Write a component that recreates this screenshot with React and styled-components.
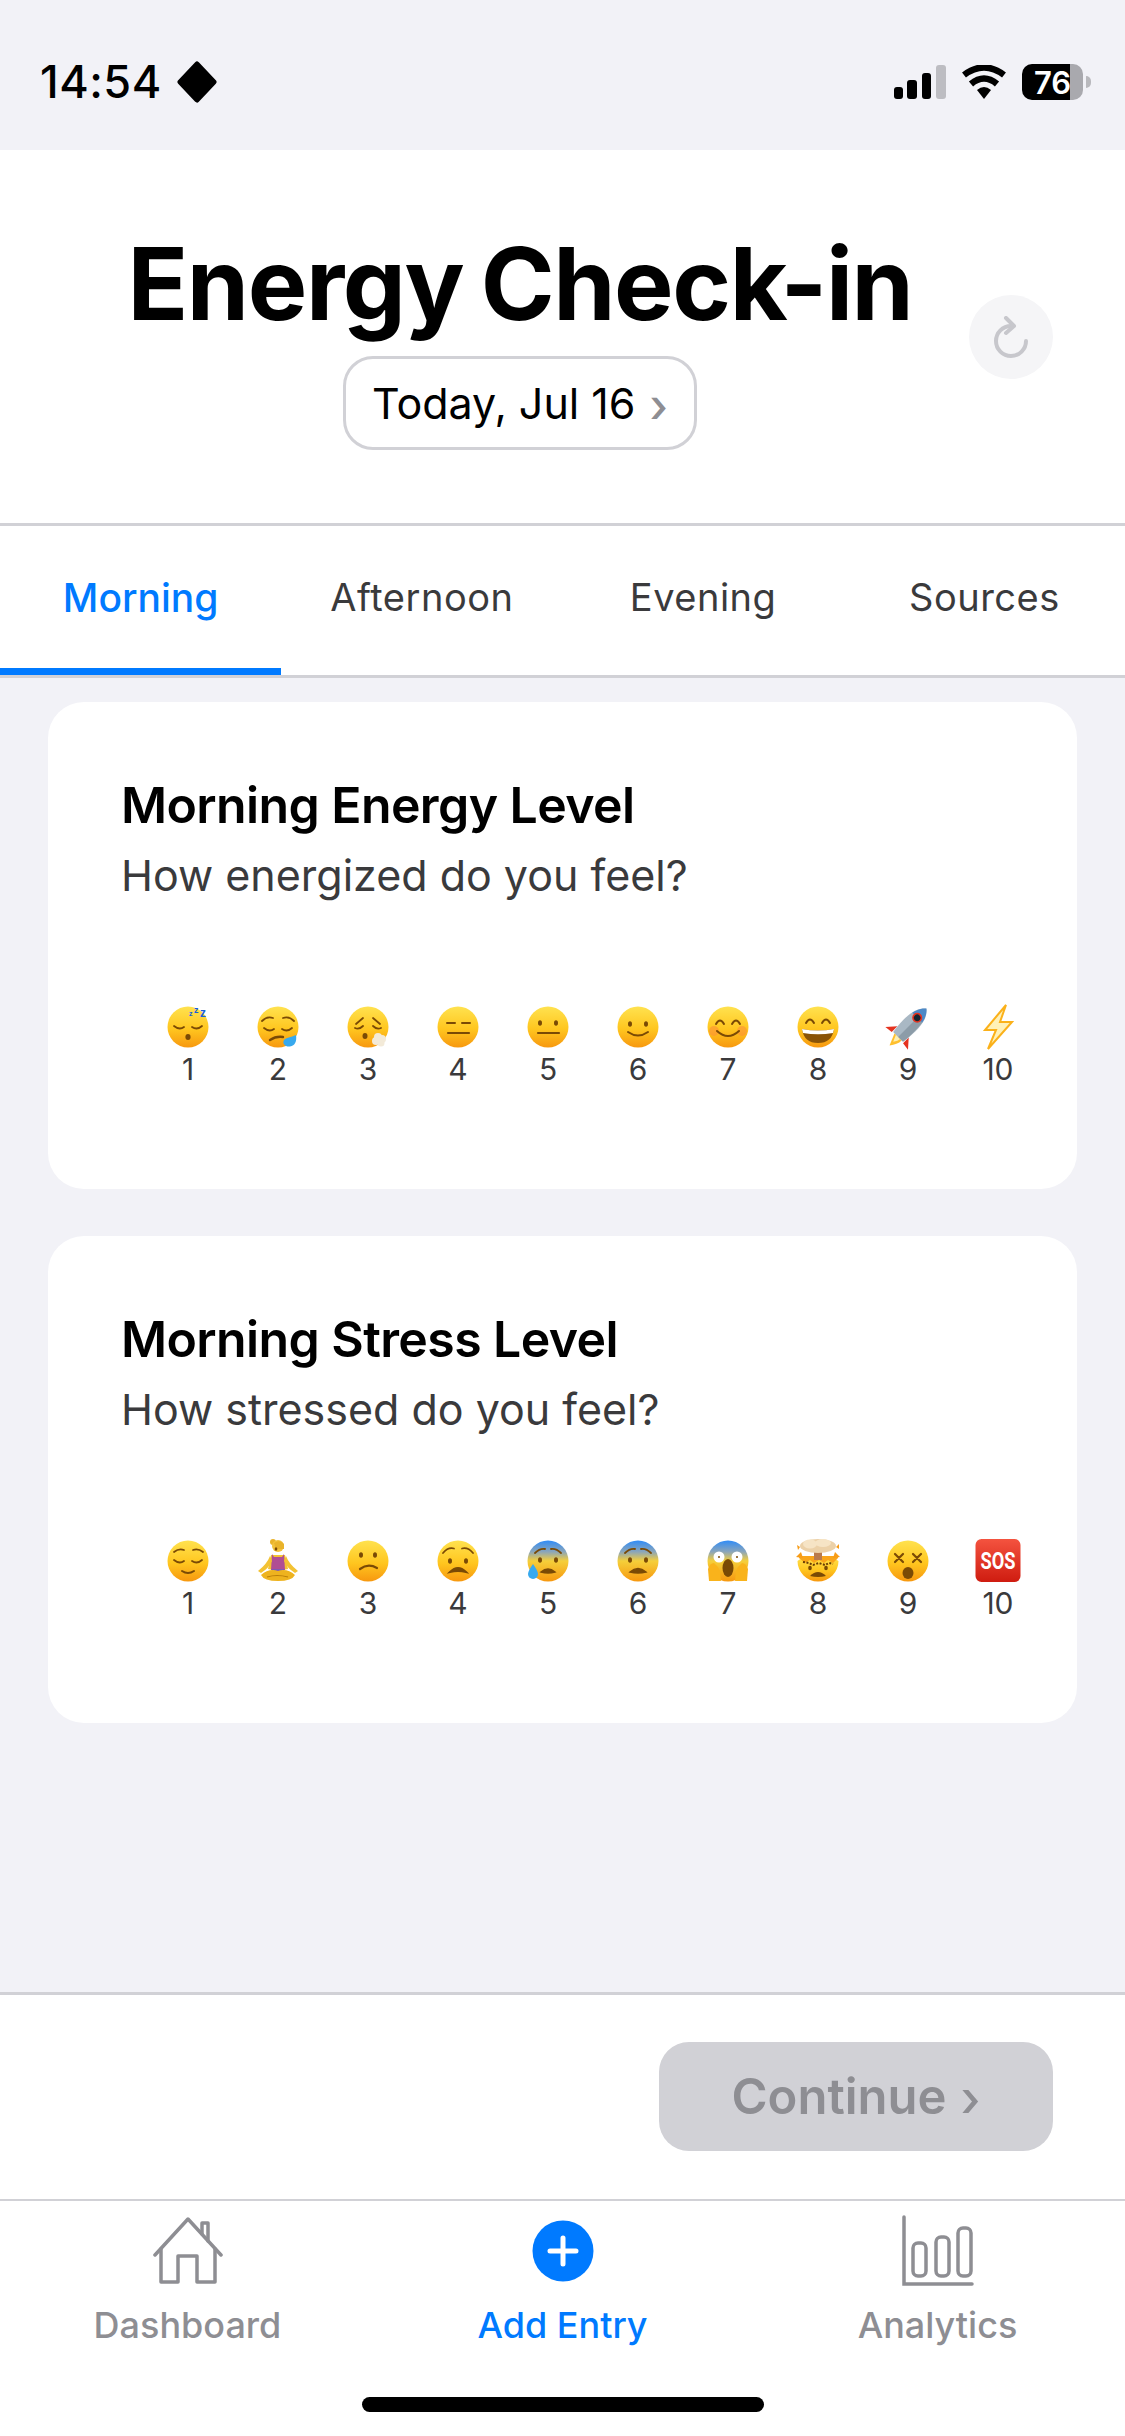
import React from 'react';
import styled, { createGlobalStyle } from 'styled-components';

const GlobalStyle = createGlobalStyle`
  html, body {
    margin: 0;
    padding: 0;
    background: #f2f2f7;
  }
  * {
    box-sizing: border-box;
  }
`;

const Page = styled.div`
  width: 1125px;
  height: 2436px;
  display: flex;
  flex-direction: column;
  background: #f2f2f7;
  font-family: Inter, 'Liberation Sans', sans-serif;
  overflow: hidden;
`;

const StatusBar = styled.div`
  height: 150px;
  flex: none;
  display: flex;
  align-items: flex-start;
  justify-content: space-between;
  padding: 60px 42px 0 40px;
`;

const StatusLeft = styled.div`
  display: flex;
  align-items: center;
  gap: 14px;
  height: 44px;
`;

const StatusRight = styled.div`
  display: flex;
  align-items: center;
  height: 44px;
  gap: 15px;
`;

const Clock = styled.span`
  font-size: 45px;
  font-weight: 500;
  letter-spacing: 0.5px;
  color: #000;
  line-height: 44px;
`;

const Battery = styled.div`
  position: relative;
  width: 61px;
  height: 36px;
  border-radius: 10px;
  background: linear-gradient(90deg, #000 0 78%, #a9a9ae 78% 100%);
  display: flex;
  align-items: center;
  justify-content: center;
  color: #fff;
  font-size: 31px;
  font-weight: 600;
  &::after {
    content: '';
    position: absolute;
    right: -8px;
    top: 12px;
    width: 5px;
    height: 12px;
    border-radius: 0 5px 5px 0;
    background: #b9b9bd;
  }
`;

const Header = styled.header`
  position: relative;
  flex: none;
  background: #fff;
  display: flex;
  flex-direction: column;
  align-items: center;
  padding: 74px 85px 73px 0;
  border-bottom: 3px solid #d1d1d6;
`;

const Title = styled.h1`
  margin: 0;
  font-size: 100px;
  line-height: 120px;
  font-weight: 700;
  letter-spacing: -1.4px;
  word-spacing: -5px;
  color: #000;
`;

const DateButton = styled.button`
  margin-top: 12px;
  height: 94px;
  width: 354px;
  border: 3px solid #d1d1d6;
  border-radius: 30px;
  background: #fff;
  display: flex;
  align-items: center;
  justify-content: center;
  gap: 14px;
  font-family: inherit;
  font-size: 43px;
  color: #000;
  padding: 0;
`;

const Chevron = styled.span`
  color: ${p => p.$color};
  font-size: ${p => p.$size}px;
  line-height: 1;
  font-weight: 500;
  position: relative;
  top: 2px;
`;

const RefreshButton = styled.div`
  position: absolute;
  right: 72px;
  top: 145px;
  width: 84px;
  height: 84px;
  border-radius: 50%;
  background: #f5f5f7;
  display: flex;
  align-items: center;
  justify-content: center;
`;

const Tabs = styled.nav`
  flex: none;
  display: flex;
  background: #fff;
  border-bottom: 3px solid #d1d1d6;
`;

const Tab = styled.div`
  flex: 1;
  height: 149px;
  display: flex;
  align-items: center;
  justify-content: center;
  font-size: ${p => (p.$active ? 39 : 38)}px;
  font-weight: ${p => (p.$active ? 500 : 400)};
  letter-spacing: ${p => (p.$active ? '0' : '0.5px')};
  color: ${p => (p.$active ? '#007aff' : '#3a3a3c')};
  border-bottom: 7px solid ${p => (p.$active ? '#007aff' : 'transparent')};
`;

const Content = styled.main`
  flex: 1;
  display: flex;
  flex-direction: column;
  gap: 47px;
  padding: 24px 48px 0;
`;

const Card = styled.section`
  background: #fff;
  border-radius: 36px;
  padding: 73px 73px 102px;
`;

const CardTitle = styled.h2`
  margin: 0;
  font-size: 50px;
  line-height: 60px;
  font-weight: 600;
  letter-spacing: -0.6px;
  color: #000;
`;

const CardSubtitle = styled.p`
  margin: 10px 0 0;
  font-size: 43px;
  line-height: 60px;
  color: #3a3a3c;
`;

const Scale = styled.div`
  display: flex;
  margin: 99px 0 0 22px;
`;

const ScaleItem = styled.div`
  flex: none;
  width: 90px;
  display: flex;
  flex-direction: column;
  align-items: center;
`;

const ScaleNumber = styled.span`
  font-size: 30px;
  line-height: 36px;
  margin-top: 1px;
  color: #3a3a3c;
`;

const Footer = styled.div`
  flex: none;
  display: flex;
  justify-content: flex-end;
  background: #fff;
  border-top: 3px solid #d1d1d6;
  padding: 47px 72px 48px 0;
`;

const ContinueButton = styled.button`
  width: 394px;
  height: 109px;
  border: 0;
  border-radius: 30px;
  background: #d1d1d6;
  color: #8e8e93;
  font-family: inherit;
  font-size: 49px;
  font-weight: 600;
  display: flex;
  align-items: center;
  justify-content: center;
  gap: 14px;
  padding: 0;
`;

const BottomNav = styled.div`
  flex: none;
  background: #fff;
  border-top: 2px solid #d1d1d6;
`;

const NavRow = styled.div`
  display: flex;
  padding-top: 13px;
`;

const NavItem = styled.div`
  flex: 1;
  display: flex;
  flex-direction: column;
  align-items: center;
  gap: 15px;
  color: ${p => (p.$active ? '#007aff' : '#8e8e93')};
  font-size: 36px;
  font-weight: 500;
  line-height: 44px;
`;

const NavIcon = styled.div`
  height: 74px;
  display: flex;
  align-items: center;
  justify-content: center;
`;

const HomeIndicator = styled.div`
  width: 402px;
  height: 15px;
  margin: 50px auto 24px;
  border-radius: 8px;
  background: #000;
`;

const HiddenDefs = styled.svg`
  position: absolute;
  width: 0;
  height: 0;
`;

const EmojiSvg = styled.svg`
  width: 46px;
  height: 46px;
  overflow: visible;
  display: block;
`;

const BROWN = '#7a4a05';

const GradientDefs = () => (
  <HiddenDefs aria-hidden="true">
    <defs>
      <linearGradient id="gold" x1="0" y1="0" x2="0" y2="1">
        <stop offset="0" stopColor="#ffe24f" />
        <stop offset="0.55" stopColor="#ffc61f" />
        <stop offset="1" stopColor="#f7980f" />
      </linearGradient>
      <linearGradient id="fear" x1="0" y1="0" x2="0" y2="1">
        <stop offset="0" stopColor="#2f8cf8" />
        <stop offset="0.28" stopColor="#8da6b8" />
        <stop offset="0.5" stopColor="#f5cf3a" />
        <stop offset="1" stopColor="#f7980f" />
      </linearGradient>
      <linearGradient id="sos" x1="0" y1="0" x2="0" y2="1">
        <stop offset="0" stopColor="#f4533f" />
        <stop offset="1" stopColor="#cf1c10" />
      </linearGradient>
    </defs>
  </HiddenDefs>
);

const Face = ({ fill = 'gold', children }) => (
  <>
    <circle cx="23" cy="23" r="20.5" fill={`url(#${fill})`} />
    <g fill="none" stroke={BROWN} strokeWidth="1.8" strokeLinecap="round">
      {children}
    </g>
  </>
);

const Dot = ({ x, y, rx = 2, ry = 2.8 }) => <ellipse cx={x} cy={y} rx={rx} ry={ry} fill={BROWN} stroke="none" />;

const ClosedEyes = ({ y = 20 }) => (
  <>
    <path d={`M9 ${y - 1}q5.5 4.5 10 1`} />
    <path d={`M27 ${y}q5 3.5 10 -1`} />
  </>
);

const Sleeping = () => (
  <>
    <Face>
      <ClosedEyes y={23} />
      <ellipse cx="23" cy="33" rx="2.6" ry="3" fill={BROWN} stroke="none" />
    </Face>
    <text x="24" y="12" fontFamily="Liberation Sans" fontWeight="700" fontSize="7" fill="#1a5fd8">z</text>
    <text x="29" y="9" fontFamily="Liberation Sans" fontWeight="700" fontSize="9" fill="#1a5fd8">z</text>
    <text x="35" y="13" fontFamily="Liberation Sans" fontWeight="700" fontSize="12" fill="#1a5fd8">z</text>
  </>
);

const Sleepy = () => (
  <>
    <Face>
      <path d="M7 17q5-5 11-3" />
      <path d="M28 14q6-2 11 3" />
      <ClosedEyes y={25} />
      <path d="M15 36q6-4 13-3" strokeWidth="2.400" />
    </Face>
    <path d="M41 31c1 6-1 11-6 11.500c-5 .5-8-3-6-6.500c2-2.500 7-2.500 12-5z" fill="#37a9ee" />
  </>
);

const Exhale = () => (
  <>
    <Face>
      <path d="M11 20l7-6" />
      <path d="M35 20l-7-6" />
      <path d="M10 24q4 2 8-2" />
      <path d="M28 22q4 4 8 2" />
      <ellipse cx="20" cy="32" rx="2.500" ry="3" fill={BROWN} stroke="none" />
    </Face>
    <g fill="#f3ead8">
      <circle cx="33" cy="33" r="4" />
      <circle cx="37" cy="35" r="4" />
      <circle cx="31" cy="37" r="4" />
      <circle cx="36" cy="39" r="3.500" />
    </g>
  </>
);

const Expressionless = () => (
  <Face>
    <path d="M12 19h8M27 19h8" strokeWidth="2" />
    <path d="M13 29h21" strokeWidth="2.200" />
  </Face>
);

const Neutral = () => (
  <Face>
    <Dot x={15} y={19} />
    <Dot x={31} y={19} />
    <path d="M13 29h21" strokeWidth="2.200" />
  </Face>
);

const Slight = () => (
  <Face>
    <Dot x={15} y={20} />
    <Dot x={31} y={20} />
    <path d="M13 28q10 7 20 0" strokeWidth="2" />
  </Face>
);

const Blush = () => (
  <>
    <circle cx="9" cy="27" r="5" fill="#fb8c3a" opacity="0.55" />
    <circle cx="37" cy="27" r="5" fill="#fb8c3a" opacity="0.55" />
  </>
);

const Smiling = () => (
  <>
    <Face />
    <Blush />
    <g fill="none" stroke={BROWN} strokeWidth="2" strokeLinecap="round">
      <path d="M11 20q4-7 8 0M27 20q4-7 8 0" />
      <path d="M12 27q11 10 22 0" />
    </g>
  </>
);

const Grin = () => (
  <Face>
    <path d="M11 19q4-7 8 0M27 19q4-7 8 0" strokeWidth="2" />
    <path d="M7 25q16 3 32 0q-2 14-16 14t-16-14z" fill="#8a5306" stroke="none" />
    <path d="M7 25q16 3 32 0l-1 4q-15 2.500-30 0z" fill="#fff" stroke="none" />
  </Face>
);

const Rocket = () => (
  <g transform="rotate(45 23 23)">
    <path d="M15 30l-8 9l8-1zM31 30l8 9l-8-1z" fill="#e5331f" />
    <path d="M18 37q5 12 5 12q5-6 5-12z" fill="#ffc02e" />
    <path d="M20 37q3 7 3 7q3-4 3-7z" fill="#fff0b0" />
    <path d="M23-3c8 6 10 18 7 40h-14c-3-22-1-34 7-40z" fill="#a9b8c4" />
    <path d="M23-3c5 4 6 9 7 13h-14c1-4 2-9 7-13z" fill="#4d89c7" />
    <path d="M23 10h7c1 9 1 17 0 27h-7z" fill="#6f7f8c" opacity="0.5" />
    <circle cx="23" cy="10" r="5" fill="#e5331f" />
    <circle cx="23" cy="10" r="3.300" fill="#16242f" />
  </g>
);

const Bolt = () => (
  <path d="M31 1L10 26h11L13 45l24-27H25z" fill="#fff1b8" stroke="#fbb11a" strokeWidth="2" strokeLinejoin="miter" />
);

const Relieved = () => (
  <Face>
    <path d="M9 14q5-4 10-2" />
    <path d="M28 12q5-2 10 2" />
    <ClosedEyes y={23} />
    <path d="M17 33q6 4 12 0" strokeWidth="2" />
  </Face>
);

const Meditate = () => (
  <>
    <circle cx="18" cy="4" r="3" fill="#e9b32a" />
    <circle cx="23" cy="8" r="6" fill="#f2c23a" />
    <path d="M19 5q6-4 10 1v5h-8z" fill="#e9b32a" />
    <ellipse cx="21" cy="11" rx="1.300" ry="1.800" fill={BROWN} />
    <path d="M16 17h14l3 14l-10 2l-10-2z" fill="#f3c233" />
    <path d="M17 16l2 3h8l2-3l1 16h-14z" fill="#b04e93" />
    <path d="M16 31h14l-7 4z" fill="#7a5bb8" />
    <path d="M15 18q-3 8-12 15l3 2q8-5 11-12zM31 18q3 8 12 15l-3 2q-8-5-11-12z" fill="#f3c233" />
    <path d="M6 37q8-7 17-4q9-3 17 4q-3 6-17 6t-17-6z" fill="#eeb31f" />
    <path d="M12 39q10-3 21 0" fill="none" stroke="#b97e08" strokeWidth="1.200" />
  </>
);

const Confused = () => (
  <Face>
    <Dot x={16} y={17} />
    <Dot x={30} y={17} />
    <path d="M15 31q8-6 17-1" strokeWidth="2.200" />
  </Face>
);

const Worried = () => (
  <Face>
    <path d="M8 15q5-6 11-4.500M27 10.500q6-1.500 11 4.500" />
    <Dot x={15} y={23} />
    <Dot x={31} y={23} />
    <path d="M15 34q8-8 16 0q-8-2-16 0z" strokeWidth="2" fill={BROWN} />
  </Face>
);

const Anxious = () => (
  <>
    <Face fill="fear">
      <path d="M10 15q5-5 10-4M26 11q5-1 10 4" />
      <Dot x={15} y={22} />
      <Dot x={31} y={22} />
      <path d="M16 34q7-6 14 0q-7 2-14 0z" fill={BROWN} strokeWidth="1.500" />
    </Face>
    <path d="M8 26q5 7 5 10a4.800 4.800 0 0 1-10 0q0-3 5-10z" fill="#37a9ee" />
  </>
);

const Fearful = () => (
  <Face fill="fear">
    <path d="M10 15q5-5 10-4M26 11q5-1 10 4" />
    <Dot x={15} y={22} />
    <Dot x={31} y={22} />
    <path d="M15 34q8-7 16 0q-8 2-16 0z" fill={BROWN} strokeWidth="1.500" />
  </Face>
);

const Scream = () => (
  <>
    <Face fill="fear">
      <ellipse cx="23" cy="30" rx="5.500" ry="9" fill={BROWN} stroke="none" />
    </Face>
    <circle cx="14" cy="19" r="5.500" fill="#fff" />
    <circle cx="32" cy="19" r="5.500" fill="#fff" />
    <circle cx="14" cy="19" r="1" fill={BROWN} />
    <circle cx="32" cy="19" r="1" fill={BROWN} />
    <path d="M3 31q2-6 6-6q4 3 6 8l1 10H4z" fill="#f9b31b" />
    <path d="M43 31q-2-6-6-6q-4 3-6 8l-1 10h12z" fill="#f9b31b" />
  </>
);

const Exploding = () => (
  <>
    <path d="M2.500 23a20.500 20.500 0 0 0 41 0l-8-5h-26z" fill="url(#gold)" />
    <path d="M4 20l6 5 5-3 4 3 5-3 5 3 4-3 5 3 5-5v-2H4z" fill="#f9a51a" />
    <path d="M8 24l6 1 4 2 6-2 6 2 4-2 4 1" fill="none" stroke="#6a3d05" strokeWidth="2" strokeDasharray="2 1.500" />
    <path d="M15 38q8-8 16 0q-8 2-16 0z" fill={BROWN} />
    <ellipse cx="15" cy="30" rx="1.800" ry="2.200" fill={BROWN} />
    <ellipse cx="31" cy="30" rx="1.800" ry="2.200" fill={BROWN} />
    <rect x="19" y="12" width="8" height="10" fill="#b97a4c" />
    <ellipse cx="23" cy="8" rx="18" ry="7" fill="#ecd1a8" />
    <ellipse cx="15" cy="6" rx="7" ry="4.500" fill="#f6e4c5" />
    <ellipse cx="28" cy="5" rx="8" ry="4" fill="#f6e4c5" />
    <path d="M2 7l3 2-2 3zM44 6l-3 3 3 2zM1 19l5-5 2 6zM45 19l-5-5-2 6z" fill="#f79c18" />
  </>
);

const Dizzy = () => (
  <Face>
    <path d="M10 16l8 8M18 16l-8 8M28 16l8 8M36 16l-8 8" strokeWidth="2.200" />
    <ellipse cx="23" cy="35" rx="5.500" ry="6" fill={BROWN} stroke="none" />
  </Face>
);

const Sos = () => (
  <>
    <rect x="0.500" y="1" width="45" height="43" rx="6" fill="url(#sos)" />
    <text x="23" y="31" textAnchor="middle" textLength="35" lengthAdjust="spacingAndGlyphs" fontFamily="Roboto, sans-serif" fontWeight="700" fontSize="24" fill="#fff">SOS</text>
  </>
);

const energyScale = [Sleeping, Sleepy, Exhale, Expressionless, Neutral, Slight, Smiling, Grin, Rocket, Bolt];
const stressScale = [Relieved, Meditate, Confused, Worried, Anxious, Fearful, Scream, Exploding, Dizzy, Sos];

const EmojiScale = ({ emojis }) => (
  <Scale>
    {emojis.map((Emoji, i) => (
      <ScaleItem key={i}>
        <EmojiSvg viewBox="0 0 46 46">
          <Emoji />
        </EmojiSvg>
        <ScaleNumber>{i + 1}</ScaleNumber>
      </ScaleItem>
    ))}
  </Scale>
);

const SignalIcon = () => (
  <svg width="52" height="34" viewBox="0 0 52 34">
    <rect x="0" y="22" width="9" height="12" rx="3" fill="#000" />
    <rect x="13" y="15" width="10" height="19" rx="3" fill="#000" />
    <rect x="28" y="8" width="9" height="26" rx="3" fill="#000" />
    <rect x="42" y="0" width="10" height="34" rx="3" fill="#bdbdc2" />
  </svg>
);

const WifiIcon = () => (
  <svg width="46" height="34" viewBox="0 0 46 34">
    <path d="M23 34l-7-9q7-6 14 0z" fill="#000" />
    <path d="M10 19q13-11 26 0" fill="none" stroke="#000" strokeWidth="6.500" />
    <path d="M3 10q20-15 40 0" fill="none" stroke="#000" strokeWidth="6.500" />
  </svg>
);

const DiamondIcon = () => (
  <svg width="42" height="42" viewBox="0 0 42 42">
    <path d="M21 3L38 21L21 39L4 21z" fill="#000" stroke="#000" strokeWidth="5" strokeLinejoin="round" />
  </svg>
);

const RefreshIcon = () => (
  <svg width="40" height="42" viewBox="0 0 40 42" fill="none" stroke="#c7c7cc" strokeWidth="4" strokeLinecap="round" strokeLinejoin="round">
    <path d="M20 10A15 15 0 1 0 35 25" />
    <path d="M15 2l8 8l-8 7" />
  </svg>
);

const HomeIcon = () => (
  <svg width="70" height="68" viewBox="0 0 70 68" fill="none" stroke="#8e8e93" strokeWidth="3.500" strokeLinejoin="round" strokeLinecap="round">
    <path d="M2 38L35 2L68 38" />
    <path d="M49 17V6h6v18" />
    <path d="M8 32V65H25V39H44V65H62V32" />
  </svg>
);

const PlusIcon = () => (
  <svg width="62" height="62" viewBox="0 0 62 62">
    <circle cx="31" cy="31" r="30.500" fill="#007aff" />
    <path d="M18 31h26M31 18v26" stroke="#fff" strokeWidth="5" strokeLinecap="round" />
  </svg>
);

const ChartIcon = () => (
  <svg width="72" height="72" viewBox="0 0 72 72" fill="none" stroke="#8e8e93" strokeWidth="3.500" strokeLinecap="round">
    <path d="M2 2V69H70" />
    <rect x="11" y="28" width="13" height="33" rx="5" />
    <rect x="34" y="22" width="13" height="39" rx="5" />
    <rect x="56" y="13" width="13" height="48" rx="5" />
  </svg>
);

const App = () => (
  <Page>
    <GlobalStyle />
    <GradientDefs />
    <StatusBar>
      <StatusLeft>
        <Clock>14:54</Clock>
        <DiamondIcon />
      </StatusLeft>
      <StatusRight>
        <SignalIcon />
        <WifiIcon />
        <Battery>76</Battery>
      </StatusRight>
    </StatusBar>
    <Header>
      <Title>Energy Check-in</Title>
      <DateButton>
        Today, Jul 16 <Chevron $color="#8e8e93" $size={46}>›</Chevron>
      </DateButton>
      <RefreshButton>
        <RefreshIcon />
      </RefreshButton>
    </Header>
    <Tabs>
      <Tab $active>Morning</Tab>
      <Tab>Afternoon</Tab>
      <Tab>Evening</Tab>
      <Tab>Sources</Tab>
    </Tabs>
    <Content>
      <Card>
        <CardTitle>Morning Energy Level</CardTitle>
        <CardSubtitle>How energized do you feel?</CardSubtitle>
        <EmojiScale emojis={energyScale} />
      </Card>
      <Card>
        <CardTitle>Morning Stress Level</CardTitle>
        <CardSubtitle>How stressed do you feel?</CardSubtitle>
        <EmojiScale emojis={stressScale} />
      </Card>
    </Content>
    <Footer>
      <ContinueButton>
        Continue <Chevron $color="#8e8e93" $size={50}>›</Chevron>
      </ContinueButton>
    </Footer>
    <BottomNav>
      <NavRow>
        <NavItem>
          <NavIcon><HomeIcon /></NavIcon>
          Dashboard
        </NavItem>
        <NavItem $active>
          <NavIcon><PlusIcon /></NavIcon>
          Add Entry
        </NavItem>
        <NavItem>
          <NavIcon><ChartIcon /></NavIcon>
          Analytics
        </NavItem>
      </NavRow>
      <HomeIndicator />
    </BottomNav>
  </Page>
);

export default App;
